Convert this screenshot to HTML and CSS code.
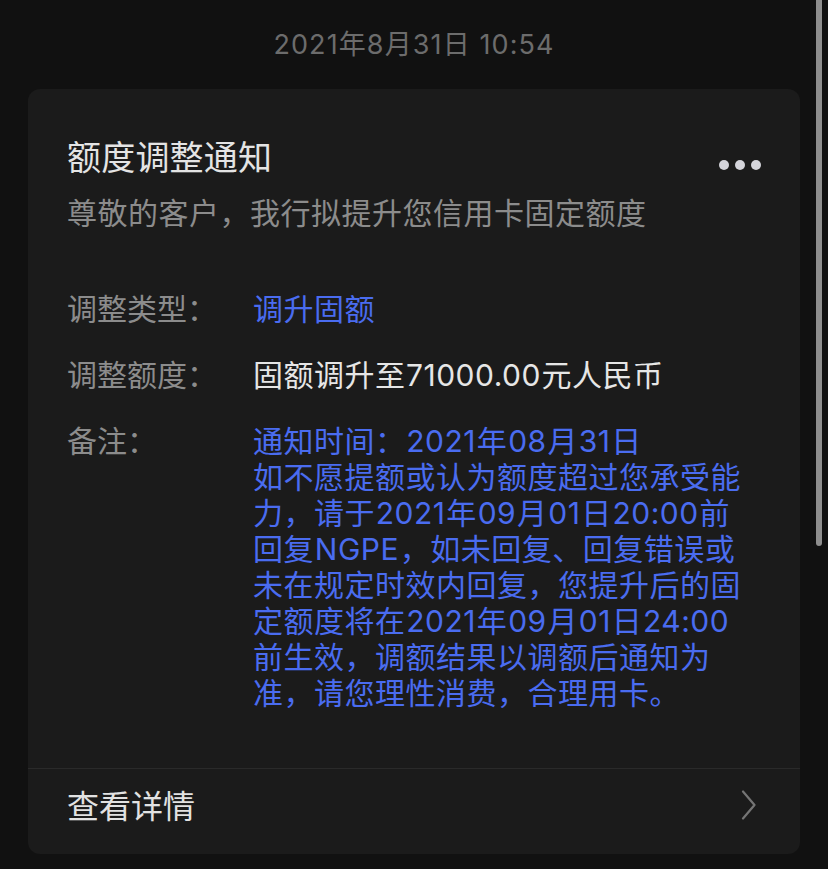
FILE: index.html
```html
<!DOCTYPE html>
<html lang="zh-CN">
<head>
<meta charset="utf-8">
<title>额度调整通知</title>
<link rel="stylesheet" href="styles.css">
</head>
<body>
<div class="page">
  <div class="time">2021年8月31日 10:54</div>
  <div class="card">
    <div class="card-body">
      <div class="head">
        <div class="title">额度调整通知</div>
        <div class="more"><span></span><span></span><span></span></div>
      </div>
      <div class="subtitle">尊敬的客户，我行拟提升您信用卡固定额度</div>
      <div class="rows">
        <div class="row">
          <div class="label">调整类型：</div>
          <div class="value blue">调升固额</div>
        </div>
        <div class="row">
          <div class="label">调整额度：</div>
          <div class="value">固额调升至<span class="n w">71000.00</span>元人民币</div>
        </div>
        <div class="row">
          <div class="label">备注：</div>
          <div class="value blue">通知时间：<span class="n">2021</span>年<span class="n">08</span>月<span class="n">31</span>日<br>如不愿提额或认为额度超过您承受能<br>力，请于<span class="n">2021</span>年<span class="n">09</span>月<span class="n">01</span>日<span class="n">20:00</span>前<br>回复<span class="n">NGPE</span>，如未回复、回复错误或<br>未在规定时效内回复，您提升后的固<br>定额度将在<span class="n">2021</span>年<span class="n">09</span>月<span class="n">01</span>日<span class="n">24:00</span><br>前生效，调额结果以调额后通知为<br>准，请您理性消费，合理用卡。</div>
        </div>
      </div>
    </div>
    <div class="footer">
      <div class="detail">查看详情</div>
      <svg class="chev" width="16" height="30" viewBox="0 0 16 30"><path d="M2 1.5 L13.5 15 L2 28.5" fill="none" stroke="#757575" stroke-width="2.2" stroke-linecap="round" stroke-linejoin="round"/></svg>
    </div>
  </div>
</div>
<div class="scrollbar"></div>
</body>
</html>
```

FILE: styles.css
```css
html, body {
  margin: 0;
  padding: 0;
  background: #111111;
}
body {
  font-family: "Inter", "Noto Sans CJK SC", sans-serif;
  width: 828px;
  height: 869px;
  overflow: hidden;
}
.page {
  padding-top: 30px;
}
.time {
  text-align: center;
  font-size: 27px;
  line-height: 30px;
  color: #6c6c6c;
  letter-spacing: 1.1px;
}
.card {
  margin: 29px 28px 0 28px;
  background: #1b1b1b;
  border-radius: 12px;
  overflow: hidden;
}
.card-body {
  padding: 49px 38px 57px 39px;
}
.head {
  display: flex;
  justify-content: space-between;
  align-items: flex-start;
}
.title {
  font-size: 34px;
  line-height: 40px;
  color: #e4e4e4;
  letter-spacing: 0.2px;
}
.more {
  display: flex;
  gap: 6px;
  margin-top: 22px;
  margin-right: 1px;
}
.more span {
  width: 10px;
  height: 10px;
  border-radius: 50%;
  background: #d4d4da;
}
.subtitle {
  margin-top: 15px;
  font-size: 30px;
  line-height: 40px;
  color: #8c8c8c;
  letter-spacing: 0.5px;
}
.rows {
  margin-top: 58px;
  display: flex;
  flex-direction: column;
  gap: 30px;
}
.row {
  display: flex;
  font-size: 30px;
  line-height: 36px;
}
.label {
  width: 186px;
  flex: none;
  color: #8c8c8c;
}
.value {
  color: #e6e6e6;
  white-space: nowrap;
  letter-spacing: 0.5px;
}
.blue {
  color: #4a6cf0;
}
.n {
  padding: 0 0.8px;
}
.n.w {
  padding: 0 0.5px;
}
.footer {
  border-top: 1px solid #2a2a2a;
  display: flex;
  justify-content: space-between;
  align-items: center;
  padding: 18px 43px 27px 39px;
}
.detail {
  font-size: 32px;
  line-height: 40px;
  color: #e2e2e2;
}
.chev {
  display: block;
  margin-top: -4px;
}
.scrollbar {
  position: fixed;
  top: 0;
  left: 816px;
  width: 6px;
  height: 546px;
  background: #8e8e8e;
  border-radius: 0 0 3px 3px;
}
```
